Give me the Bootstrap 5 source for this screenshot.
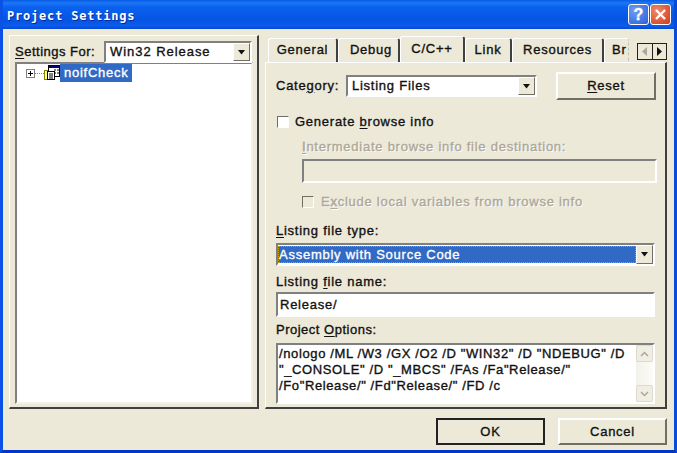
<!DOCTYPE html>
<html lang="en"><head><meta charset="utf-8"><title>Project Settings</title>
<link href="https://cdn.jsdelivr.net/npm/bootstrap@5.3.0/dist/css/bootstrap.min.css" rel="stylesheet">
<style>
html,body{margin:0;background:#ece9d8;}
.dlg{width:677px;height:453px;background:#ece9d8;border-left:3px solid #0a52e6;border-right:3px solid #0a4ad8;border-bottom:3px solid #0035c8;box-sizing:border-box;font:normal 13px/16px "Liberation Sans",sans-serif;-webkit-text-stroke:.35px currentColor;letter-spacing:.75px;color:#111;overflow:hidden;}
.ttl{height:29px;margin:0 -3px;padding:0 6px 0 7px;background:linear-gradient(#0a5ae4 0,#1a78f6 3px,#0a62ee 7px,#0654e4 20px,#0a5cec 26px,#0648d0 29px);}
.ttl-t{color:#fff;font:bold 12px/1 "DejaVu Sans Mono","Liberation Mono",monospace;letter-spacing:.8px;text-shadow:1px 1px 0 #0a2a90;position:relative;top:1px;-webkit-text-stroke:0;}
.cap{width:21px;height:21px;border:1px solid #fff;border-radius:3px;font:bold 16px/19px "Liberation Sans",sans-serif;color:#fff;text-align:center;letter-spacing:0;}
.cap-h{background:radial-gradient(circle at 30% 30%,#6f9cf2,#2a5fdc);margin-right:1px;}
.cap-x{background:radial-gradient(circle at 30% 30%,#ec8a6c,#d23a18);}
.bodyrow{padding:6px 0 0 6px;gap:6px;}
.lft{width:250px;height:374px;background:#ece9d8;border-top:1px solid #fff;border-left:1px solid #fff;border-right:2px solid #404040;border-bottom:2px solid #404040;padding:5px 4px 4px 5px;}
.setfor{height:22px;margin-bottom:-1px;}
.setlab{width:89px;white-space:nowrap;letter-spacing:.5px;}
.combo{background:#fff;border:2px solid;border-color:#808080 #fff #fff #808080;box-sizing:border-box;line-height:18px;height:22px;}
.combo-a{margin-right:1px;letter-spacing:.95px;}
.arr{width:17px;background:#ece9d8;border:1px solid;border-color:#fff #716f64 #716f64 #fff;}
.tree{height:342px;background:#fff;border:2px solid;border-color:#808080 #f4f2e8 #f4f2e8 #808080;padding:0;}
.trow{height:18px;padding-left:9px;}
.pbox{width:9px;height:9px;flex:none;}
.dots{width:9px;border-top:1px dotted #808080;flex:none;}
.sel{background:#316ac5;color:#fff;padding:0 3px 0 4px;line-height:18px;}
.rgt{width:402px;position:relative;}
.tabsrow{height:27px;padding-left:3px;overflow:hidden;align-items:flex-end;}
.tb{height:24px;line-height:22px;text-align:center;border:solid #fff;border-width:1px 0 0 1px;border-right:2px solid #404040;border-radius:3px 3px 0 0;}
.tb-g{width:70px;}
.tb-d{width:62px;padding-left:5px;}
.tb-c{width:65px;}
.tb-l{width:47px;}
.tb-r{width:92px;}
.tb-on{height:27px;margin-bottom:-1px;border-bottom:0;background:#ece9d8;position:relative;z-index:1;line-height:24px;}
.tb-cut{width:25px;border-right:1px dashed #c4c2b4;text-align:left;padding-left:7px;white-space:nowrap;}
.scr{position:absolute;right:0;top:8px;width:30px;height:17px;border:1px solid #222;background:#ece9d8;}
.scr>div{flex:1;}
.scr>div+div{border-left:1px solid #222;}
.pnl{height:347px;border-top:1px solid #fff;border-left:1px solid #fff;border-right:2px solid #404040;border-bottom:2px solid #404040;padding:9px 9px 0 10px;}
.r-cat{height:28px;}
.lab-cat{width:70px;}
.btn.xp{--bs-btn-border-radius:0;--bs-btn-padding-y:0;--bs-btn-padding-x:0;font:inherit;letter-spacing:inherit;color:#111;background:#ece9d8;border:2px solid;border-color:#fff #716f64 #716f64 #fff;box-shadow:none;}
.reset{width:100px;height:28px;margin-left:19px;}
.combo-b{width:191px;}
.cb{width:12px;height:12px;flex:none;background:#fff;border:1px solid;border-color:#716f64 #fff #fff #716f64;margin-right:6px;}
.cb-d{background:#ece9d8;margin-right:7px;}
.chk1{height:12px;margin-top:16px;margin-left:1px;}
.ind{margin-left:26px;color:#aca899;text-shadow:1px 1px 0 #fff;}
.l1{height:16px;margin-top:11px;}
.dis{width:355px;height:24px;margin-top:4px;margin-left:26px;background:#ece9d8;border:2px solid;border-color:#808080 #fff #fff #808080;}
.chk2{height:12px;margin-top:13px;margin-left:26px;color:#aca899;text-shadow:1px 1px 0 #fff;}
.lb{height:16px;line-height:16px;}
.lb1{margin-top:15px;}
.wid{width:379px;}
.cmb2{height:23px;margin-top:4px;background:#fff;border:2px solid;border-color:#808080 #fff #fff #808080;}
.cmb2-v{flex:1;background:#316ac5;color:#fff;outline:1px dotted #c8a000;outline-offset:-1px;line-height:18px;padding-left:1px;margin:1px 0;}
.lb2{margin-top:8px;}
.txt{height:25px;margin-top:2px;background:#fff;border:2px solid;border-color:#808080 #fff #fff #808080;padding:0 0 0 2px;font:inherit;letter-spacing:inherit;color:#111;border-radius:0;line-height:21px;}
.lb3{margin-top:5px;}
.lb-po{letter-spacing:.5px;}
.opt{height:61px;margin-top:5px;background:#fff;border:2px solid;border-color:#808080 #fff #fff #808080;line-height:16px;}
.opt-t{flex:1;padding:1px 0 0 1px;white-space:nowrap;letter-spacing:.62px;}
.sb{width:17px;background:linear-gradient(90deg,#f3f2ea,#fbfbf8);}
.sbb{height:17px;background:#f0eee2;border:1px solid #dcdad0;border-radius:2px;}
.foot{padding:9px 0 0 433px;gap:13px;}
.ok{width:109px;height:27px;border:2px solid #222!important;}
.cancel{width:109px;height:27px;}
u{text-underline-offset:2px;}
</style></head><body>
<div class="dlg d-flex flex-column">
 <div class="ttl d-flex align-items-center justify-content-between">
  <span class="ttl-t">Project Settings</span>
  <div class="d-flex">
   <div class="cap cap-h">?</div>
   <div class="cap cap-x d-flex align-items-center justify-content-center"><svg width="13" height="13" viewBox="0 0 13 13"><path d="M2 2 11 11M11 2 2 11" stroke="#fff" stroke-width="2.4"/></svg></div>
  </div>
 </div>
 <div class="d-flex bodyrow">
  <div class="lft">
   <div class="d-flex align-items-center setfor">
    <span class="setlab"><u>S</u>ettings For:</span>
    <div class="combo combo-a d-flex flex-grow-1 align-items-center justify-content-between p-0 ps-1">
     <span>Win32 Release</span>
     <span class="arr d-flex align-items-center justify-content-center align-self-stretch"><svg width="9" height="5" viewBox="0 0 9 5"><path d="M1 0H8L4.5 4.5Z" fill="#111"/></svg></span>
    </div>
   </div>
   <div class="tree">
    <div class="trow d-flex align-items-center">
     <svg class="pbox" viewBox="0 0 9 9"><rect x=".5" y=".5" width="8" height="8" fill="#fff" stroke="#808080"/><path d="M2 4.5H7M4.5 2V7" stroke="#000"/></svg>
     <span class="dots"></span>
     <svg width="16" height="16" viewBox="0 0 16 16" class="flex-shrink-0"><rect x=".5" y="5.500" width="9" height="9" fill="#ffff80" stroke="#808000"/><rect x="4.5" y=".5" width="11" height="11" fill="#fff" stroke="#000"/><rect x="5" y="1" width="10" height="2" fill="#000080"/><path d="M10 5h2M13 5h2M10 8h2M13 8h2" stroke="#000"/><rect x="3.500" y="6.500" width="7" height="8" fill="#fff" stroke="#000"/><path d="M5 9h4M5 11h4M5 13h4" stroke="#000"/></svg>
     <span class="sel">noifCheck</span>
    </div>
   </div>
  </div>
  <div class="rgt">
   <div class="d-flex tabsrow">
    <div class="tb tb-g">General</div>
    <div class="tb tb-d">Debug</div>
    <div class="tb tb-on tb-c">C/C++</div>
    <div class="tb tb-l">Link</div>
    <div class="tb tb-r">Resources</div>
    <div class="tb tb-cut">Br</div>
   </div>
   <div class="scr d-flex">
    <div class="d-flex align-items-center justify-content-center"><svg width="5" height="9" viewBox="0 0 5 9"><path d="M5 0V9L0 4.5Z" fill="#aca899"/></svg></div>
    <div class="d-flex align-items-center justify-content-center"><svg width="5" height="9" viewBox="0 0 5 9"><path d="M0 0V9L5 4.5Z" fill="#111"/></svg></div>
   </div>
   <div class="pnl">
    <div class="d-flex align-items-center r-cat">
     <span class="lab-cat">Cate<u>g</u>ory:</span>
     <div class="combo combo-b d-flex align-items-center justify-content-between p-0 ps-1">
      <span>Listing Files</span>
      <span class="arr d-flex align-items-center justify-content-center align-self-stretch"><svg width="9" height="5" viewBox="0 0 9 5"><path d="M1 0H8L4.5 4.5Z" fill="#111"/></svg></span>
     </div>
     <button type="button" class="btn xp reset"><u>R</u>eset</button>
    </div>
    <div class="d-flex align-items-center chk1"><span class="cb"></span><span>Generate <u>b</u>rowse info</span></div>
    <div class="ind l1"><u>I</u>ntermediate browse info file destination:</div>
    <div class="dis"></div>
    <div class="d-flex align-items-center chk2"><span class="cb cb-d"></span><span>E<u>x</u>clude local variables from browse info</span></div>
    <div class="lb lb1"><u>L</u>isting file type:</div>
    <div class="d-flex cmb2 wid">
     <div class="cmb2-v">Assembly with Source Code</div>
     <span class="arr d-flex align-items-center justify-content-center"><svg width="9" height="5" viewBox="0 0 9 5"><path d="M1 0H8L4.5 4.5Z" fill="#111"/></svg></span>
    </div>
    <div class="lb lb2">Listing <u>f</u>ile name:</div>
    <input class="form-control txt wid" value="Release/" aria-label="Listing file name">
    <div class="lb lb3 lb-po">Project <u>O</u>ptions:</div>
    <div class="d-flex opt wid">
     <div class="opt-t">/nologo /ML /W3 /GX /O2 /D "WIN32" /D "NDEBUG" /D<br>"_CONSOLE" /D "_MBCS" /FAs /Fa"Release/"<br>/Fo"Release/" /Fd"Release/" /FD /c</div>
     <div class="sb d-flex flex-column justify-content-between">
      <div class="sbb d-flex align-items-center justify-content-center"><svg width="9" height="6" viewBox="0 0 9 6"><path d="M1 5 4.500 1.500 8 5" fill="none" stroke="#aca899" stroke-width="1.500"/></svg></div>
      <div class="sbb d-flex align-items-center justify-content-center"><svg width="9" height="6" viewBox="0 0 9 6"><path d="M1 1 4.500 4.500 8 1" fill="none" stroke="#aca899" stroke-width="1.500"/></svg></div>
     </div>
    </div>
   </div>
  </div>
 </div>
 <div class="d-flex foot">
  <button type="button" class="btn xp ok">OK</button>
  <button type="button" class="btn xp cancel">Cancel</button>
 </div>
</div>
<script src="https://cdn.jsdelivr.net/npm/bootstrap@5.3.0/dist/js/bootstrap.bundle.min.js"></script>
</body></html>
